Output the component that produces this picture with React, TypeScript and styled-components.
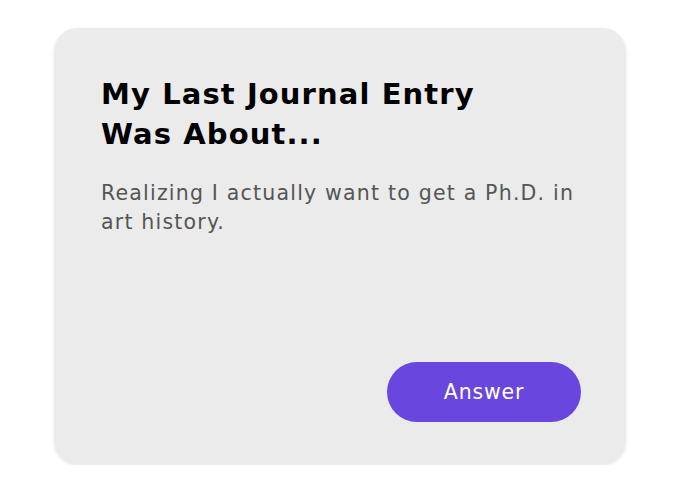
import styled, { createGlobalStyle } from "styled-components"

const GlobalStyle = createGlobalStyle`
  body {
    margin: 0;
    background: #ffffff;
    font-family: "DejaVu Sans", "Noto Sans", sans-serif;
  }
`

const Page = styled.div`
  padding: 28px 0 0 54px;
`

const Card = styled.div`
  width: 572px;
  height: 437px;
  box-sizing: border-box;
  padding: 46px 45px 43px 47px;
  background-color: #ebebeb;
  border-radius: 24px;
  box-shadow: 0 1px 4px rgba(0, 0, 0, 0.08);
  display: flex;
  flex-direction: column;
`

const Title = styled.h2`
  margin: 0;
  font-size: 29px;
  line-height: 40px;
  font-weight: 700;
  color: #000000;
  letter-spacing: 1.1px;
`

const Body = styled.p`
  margin: 25px 0 0;
  font-size: 20.5px;
  line-height: 29px;
  font-weight: 400;
  color: #555555;
  letter-spacing: 1.2px;
  width: 490px;
`

const Button = styled.button`
  margin-top: auto;
  align-self: flex-end;
  width: 194px;
  height: 60px;
  border: none;
  border-radius: 30px;
  background-color: #6946de;
  color: #ffffff;
  font-family: "DejaVu Sans", "Noto Sans", sans-serif;
  font-size: 20.5px;
  font-weight: 400;
  letter-spacing: 0.8px;
`

const App = () => {
  return (
    <Page>
      <GlobalStyle />
      <Card>
        <Title>
          My Last Journal Entry
          <br />
          Was About...
        </Title>
        <Body>Realizing I actually want to get a Ph.D. in art history.</Body>
        <Button type="button">Answer</Button>
      </Card>
    </Page>
  )
}

export default App
